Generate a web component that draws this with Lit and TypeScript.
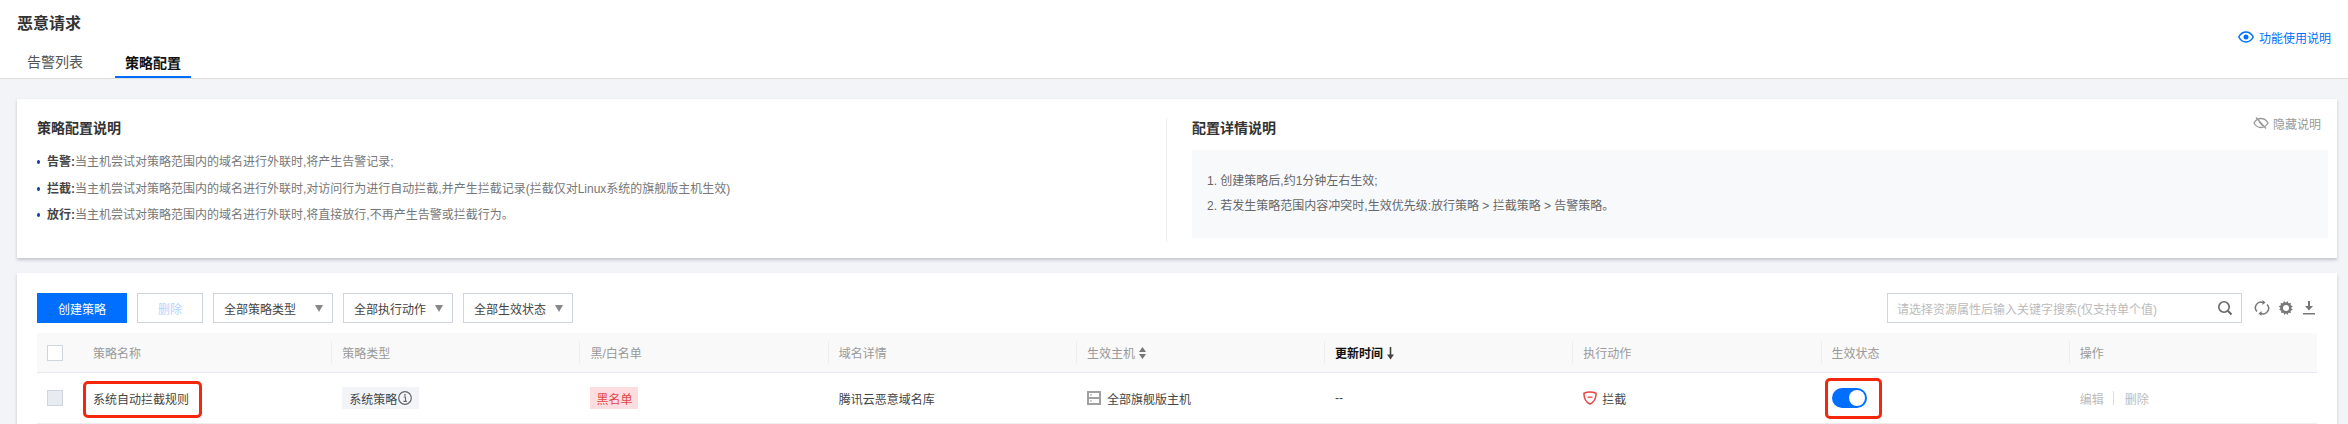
import { css, html, LitElement, svg } from "lit";
import { customElement } from "lit/decorators.js";

const columns = [
  { label: "策略名称" },
  { label: "策略类型" },
  { label: "黑/白名单" },
  { label: "域名详情" },
  { label: "生效主机", sort: "both" },
  { label: "更新时间", sort: "down" },
  { label: "执行动作" },
  { label: "生效状态" },
  { label: "操作" },
];

const sortBoth = svg`<svg class="sort" width="9" height="14" viewBox="0 0 9 14"><path d="M4.5 1 8 6H1zM4.5 13 1 8h7z" fill="#777"/></svg>`;
const sortDown = svg`<svg class="sort" width="9" height="14" viewBox="0 0 9 14"><path d="M4.5 1v10" stroke="#444" stroke-width="1.6"/><path d="M4.5 13.5 1 8.5h7z" fill="#444"/></svg>`;

@customElement("app-root")
export class AppRoot extends LitElement {
  static styles = css`
    :host {
      display: block;
      width: 2348px;
      height: 424px;
      overflow: hidden;
      background: #f2f4f8;
      color: #444;
      font-family: "Liberation Sans", "Noto Sans CJK SC", sans-serif;
      font-size: 12px;
    }
    svg {
      display: block;
      flex: none;
    }

    .header {
      height: 78px;
      padding: 0 17px;
      display: flex;
      justify-content: space-between;
      align-items: center;
      background: #fff;
      border-bottom: 1px solid #ddd;
    }
    .title {
      height: 24px;
      margin-top: 12px;
      font-size: 16px;
      line-height: 24px;
      font-weight: 600;
      color: #333;
    }
    .tabs {
      display: flex;
      margin-top: 10px;
      margin-left: -2px;
      gap: 20px;
    }
    .tab {
      padding: 0 12px;
      height: 32px;
      line-height: 32px;
      font-size: 14px;
      color: #555;
    }
    .tab--active {
      padding: 0 10px;
      width: 56px;
      color: #111;
      font-weight: 600;
      border-bottom: 2px solid #006eff;
      box-sizing: content-box;
      height: 30px;
      line-height: 34px;
    }
    .help {
      display: flex;
      align-items: center;
      gap: 5px;
      margin-bottom: 4px;
      margin-left: auto;
      color: #006eff;
    }

    .card {
      margin: 20px 11px 0 17px;
      background: #fff;
      box-shadow: 0 2px 3px rgba(54, 58, 80, 0.25);
    }
    .intro {
      height: 159px;
      display: flex;
      box-sizing: border-box;
      padding: 19px 9px 0 20px;
    }
    .intro-left {
      width: 1129px;
    }
    .intro-right {
      flex: 1;
      height: 124px;
      padding-left: 25px;
      border-left: 1px solid #eee;
    }
    .intro-title {
      font-size: 14px;
      line-height: 20px;
      font-weight: 600;
      color: #333;
    }
    .intro-head {
      display: flex;
      justify-content: space-between;
    }
    .hide {
      display: flex;
      align-items: center;
      gap: 4px;
      height: 12px;
      margin-top: -1px;
      padding-right: 7px;
      color: #999;
    }
    .notes {
      list-style: none;
      margin: 11px 0 0;
      padding: 0;
      line-height: 26.5px;
      color: #777;
    }
    .notes li {
      display: flex;
      align-items: center;
    }
    .notes li::before {
      content: "";
      width: 3px;
      height: 4px;
      margin: 0 7px 0 0;
      background: #0d3d9e;
      border-radius: 50%;
    }
    .notes b {
      color: #444;
      font-weight: 600;
    }
    .detail {
      height: 88px;
      margin-top: 12px;
      padding-left: 15px;
      display: flex;
      flex-direction: column;
      justify-content: center;
      background: #f8f9fb;
      line-height: 25px;
      color: #666;
    }

    .list {
      margin-top: 15px;
      height: 160px;
      padding: 20px 20px 0;
    }
    .toolbar {
      display: flex;
      align-items: center;
      gap: 10px;
      height: 30px;
      margin-bottom: 10px;
    }
    .btn {
      height: 30px;
      display: flex;
      align-items: center;
      justify-content: center;
      box-sizing: border-box;
    }
    .btn--primary {
      width: 90px;
      background: #006eff;
      color: #fff;
    }
    .btn--disabled {
      width: 66px;
      border: 1px solid #cfd5de;
      color: #b2d4ff;
    }
    .select {
      width: 110px;
      height: 30px;
      box-sizing: border-box;
      padding: 0 9px 0 10px;
      display: flex;
      align-items: center;
      justify-content: space-between;
      border: 1px solid #cfd5de;
      color: #444;
    }
    .select--wide {
      width: 120px;
    }
    .caret {
      width: 0;
      height: 0;
      border: 4px solid transparent;
      border-top: 7px solid #888;
      border-bottom: 0;
    }
    .search {
      width: 355px;
      height: 30px;
      box-sizing: border-box;
      margin-left: auto;
      padding: 0 8px 0 9px;
      display: flex;
      align-items: center;
      justify-content: space-between;
      border: 1px solid #cfd5de;
      color: #bbb;
    }
    .tools {
      display: flex;
      align-items: center;
      gap: 8px;
      margin-left: 2px;
      margin-right: 1px;
    }

    .table {
      display: grid;
      grid-template-columns: 46px repeat(9, 1fr);
    }
    .th {
      height: 39px;
      display: flex;
      align-items: center;
      background: #f9f9f9;
      border-bottom: 1px solid #e5e8ee;
      color: #999;
    }
    .th-inner {
      height: 23px;
      flex: 1;
      display: flex;
      align-items: center;
      gap: 3px;
      padding-left: 10px;
      border-left: 1px solid #eee;
    }
    .th--first .th-inner {
      border-left: 0;
    }
    .th--active {
      color: #111;
      font-weight: 600;
    }
    .td {
      position: relative;
      height: 50px;
      display: flex;
      align-items: center;
      padding-left: 11px;
      border-bottom: 1px solid #eee;
      color: #444;
    }
    .td--first {
      padding-left: 10px;
    }
    .check {
      width: 16px;
      height: 16px;
      box-sizing: border-box;
      border: 1px solid #cfd5de;
      background: #fff;
    }
    .th .check {
      margin-left: 10px;
    }
    .check--disabled {
      background: #e8ebf0;
    }
    .tag {
      height: 22px;
      display: flex;
      align-items: center;
      gap: 1px;
      padding: 0 7px;
      background: #f2f4f8;
    }
    .tag--red {
      background: #fddde0;
      color: #e54545;
      padding: 0 6px;
    }
    .with-icon {
      display: flex;
      align-items: center;
      gap: 6px;
    }
    .with-icon--tight {
      gap: 5px;
    }
    .toggle {
      width: 35px;
      height: 20px;
      box-sizing: border-box;
      padding: 2px;
      display: flex;
      justify-content: flex-end;
      background: #006eff;
      border-radius: 10px;
    }
    .knob {
      width: 16px;
      height: 16px;
      background: #fff;
      border-radius: 50%;
    }
    .ops {
      display: flex;
      align-items: center;
      color: #bbb;
    }
    .ops i {
      width: 1px;
      height: 14px;
      margin: 0 11px 0 9px;
      background: #ddd;
    }
    .mark {
      position: absolute;
      box-sizing: border-box;
      border: 3px solid #f5260c;
      border-radius: 5px;
    }
    .mark--name {
      left: 0;
      top: 8px;
      width: 119px;
      height: 37px;
    }
    .mark--toggle {
      left: 4px;
      top: 5px;
      width: 57px;
      height: 41px;
    }
  `;

  private renderHeader(col: { label: string; sort?: string }, i: number) {
    const active = col.sort === "down";
    return html`<div class="th ${i === 0 ? "th--first" : ""} ${active ? "th--active" : ""}">
      <div class="th-inner">
        ${col.label}${col.sort === "both" ? sortBoth : ""}${active ? sortDown : ""}
      </div>
    </div>`;
  }

  render() {
    return html`
      <div class="header">
        <div>
          <div class="title">恶意请求</div>
          <div class="tabs">
            <div class="tab">告警列表</div>
            <div class="tab tab--active">策略配置</div>
          </div>
        </div>
        <div class="help">
          <svg width="16" height="14" viewBox="0 0 16 14" fill="none">
            <path d="M.8 7C2.6 3.6 5 2 8 2s5.4 1.6 7.2 5c-1.8 3.4-4.2 5-7.2 5S2.600 10.400.8 7z" stroke="#006eff" stroke-width="1.500"/>
            <circle cx="8" cy="7" r="2.500" fill="#006eff"/>
          </svg>
          功能使用说明
        </div>
      </div>

      <div class="card intro">
        <div class="intro-left">
          <div class="intro-title">策略配置说明</div>
          <ul class="notes">
            <li><b>告警:</b>当主机尝试对策略范围内的域名进行外联时,将产生告警记录;</li>
            <li><b>拦截:</b>当主机尝试对策略范围内的域名进行外联时,对访问行为进行自动拦截,并产生拦截记录(拦截仅对Linux系统的旗舰版主机生效)</li>
            <li><b>放行:</b>当主机尝试对策略范围内的域名进行外联时,将直接放行,不再产生告警或拦截行为。</li>
          </ul>
        </div>
        <div class="intro-right">
          <div class="intro-head">
            <div class="intro-title">配置详情说明</div>
            <div class="hide">
              <svg width="16" height="14" viewBox="0 0 16 14" fill="none" stroke="#999" stroke-width="1.300">
                <path d="M1 7c1.700-3 4-4.500 7-4.500S13.300 4 15 7c-1.700 3-4 4.500-7 4.500S2.700 10 1 7z"/>
                <path d="M3 1.500 13 12.500"/>
                <path d="M6 5.500 10 10"/>
              </svg>
              隐藏说明
            </div>
          </div>
          <div class="detail">
            <div>1. 创建策略后,约1分钟左右生效;</div>
            <div>2. 若发生策略范围内容冲突时,生效优先级:放行策略 > 拦截策略 > 告警策略。</div>
          </div>
        </div>
      </div>

      <div class="card list">
        <div class="toolbar">
          <div class="btn btn--primary">创建策略</div>
          <div class="btn btn--disabled">删除</div>
          <div class="select select--wide">全部策略类型<span class="caret"></span></div>
          <div class="select">全部执行动作<span class="caret"></span></div>
          <div class="select">全部生效状态<span class="caret"></span></div>
          <div class="search">
            请选择资源属性后输入关键字搜索(仅支持单个值)
            <svg width="16" height="16" viewBox="0 0 16 16" fill="none" stroke="#666">
              <circle cx="7" cy="7" r="5.200" stroke-width="1.600"/>
              <path d="M11 11l3.500 3.500" stroke-width="2"/>
            </svg>
          </div>
          <div class="tools">
            <svg width="16" height="18" viewBox="0 0 16 18" fill="none" stroke="#777" stroke-width="1.500">
              <path d="M3 12.500A5.500 5.500 0 0 1 9.500 3.800"/>
              <path d="M13 5.500A5.500 5.500 0 0 1 6.500 14.200"/>
              <path d="M8.500 1v5l3-2.500z" fill="#777" stroke="none"/>
              <path d="M7.500 17v-5l-3 2.500z" fill="#777" stroke="none"/>
            </svg>
            <svg width="16" height="16" viewBox="0 0 16 16" fill="none">
              <path d="M8 2.800l1.500-1.800 1 2.200 2.400-.3-.3 2.400 2.200 1-1.800 1.700 1.800 1.700-2.200 1 .3 2.400-2.400-.3-1 2.200L8 13.200l-1.500 1.800-1-2.200-2.400.3.300-2.400-2.200-1L2.500 8 .7 6.300l2.200-1-.3-2.400 2.400.3 1-2.200z" fill="#777"/>
              <circle cx="8" cy="8" r="3" fill="#fff"/>
            </svg>
            <svg width="14" height="14" viewBox="0 0 14 14">
              <path d="M6 0h2v5h3L7 9.500 3 5h3z" fill="#777"/>
              <path d="M1 12h12v1.500H1z" fill="#777"/>
            </svg>
          </div>
        </div>

        <div class="table">
          <div class="th"><div class="check"></div></div>
          ${columns.map((c, i) => this.renderHeader(c, i))}

          <div class="td td--first"><div class="check check--disabled"></div></div>
          <div class="td td--first">系统自动拦截规则<div class="mark mark--name"></div></div>
          <div class="td">
            <div class="tag">
              系统策略
              <svg width="14" height="14" viewBox="0 0 14 14" fill="none">
                <circle cx="7" cy="7" r="6.300" stroke="#666" stroke-width="1.200"/>
                <path d="M5.600 6h1.900v4.200M5.500 10.400h3.400" stroke="#666" stroke-width="1.100"/>
                <circle cx="7" cy="3.800" r=".9" fill="#666"/>
              </svg>
            </div>
          </div>
          <div class="td"><div class="tag tag--red">黑名单</div></div>
          <div class="td">腾讯云恶意域名库</div>
          <div class="td">
            <div class="with-icon">
              <svg width="14" height="14" viewBox="0 0 14 14">
                <path d="M0 0h14v14H0z" fill="#a0a0a0"/>
                <path d="M2 2h10v4H2zM2 8h10v4H2z" fill="#fff"/>
                <path d="M3 3.500h2v1H3zM3 9.500h2v1H3z" fill="#a0a0a0"/>
              </svg>
              全部旗舰版主机
            </div>
          </div>
          <div class="td">--</div>
          <div class="td">
            <div class="with-icon with-icon--tight">
              <svg width="14" height="14" viewBox="0 0 14 14" fill="none">
                <path d="M1 2.200C3 1.300 5 .9 7 .9s4 .4 6 1.300c.2 4.800-1.800 8.700-6 10.900C2.800 10.900.8 7 1 2.200z" stroke="#e54545" stroke-width="1.500"/>
                <path d="M4.500 5.500h5v1.300h-5z" fill="#e54545"/>
              </svg>
              拦截
            </div>
          </div>
          <div class="td">
            <div class="toggle"><div class="knob"></div></div>
            <div class="mark mark--toggle"></div>
          </div>
          <div class="td">
            <div class="ops">编辑<i></i>删除</div>
          </div>
        </div>
      </div>
    `;
  }
}

declare global {
  interface HTMLElementTagNameMap {
    "app-root": AppRoot;
  }
}
